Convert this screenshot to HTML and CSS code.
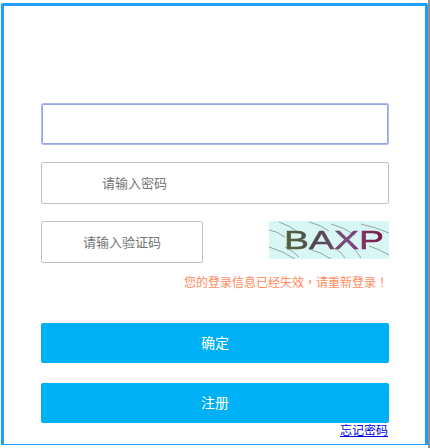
FILE: index.html
```html
<!DOCTYPE html>
<html lang="zh-CN">
<head>
    <meta charset="UTF-8">
    <title>登录</title>
    <link rel="stylesheet" href="styles.css">
</head>
<body>
    <div class="dialog">
        <form class="login-form">
            <input class="field field-active" type="text">
            <input class="field field-password" type="text" placeholder="请输入密码">
            <div class="captcha-row">
                <input class="field field-code" type="text" placeholder="请输入验证码">
                <svg class="captcha" viewBox="0 0 120 38" width="120" height="38">
                    <defs>
                        <linearGradient id="captcha-ink" x1="0" y1="0" x2="1" y2="0">
                            <stop offset="0" stop-color="#55663a"/>
                            <stop offset="0.3" stop-color="#4d4a4a"/>
                            <stop offset="0.65" stop-color="#7a4a80"/>
                            <stop offset="1" stop-color="#7a1440"/>
                        </linearGradient>
                        <filter id="captcha-blur"><feGaussianBlur stdDeviation="0.35"/></filter>
                    </defs>
                    <rect width="120" height="38" fill="#d8f6f3"/>
                    <g stroke="#8a9ba3" stroke-width="0.9" fill="none" filter="url(#captcha-blur)">
                        <path d="M0 9 Q8 10 16 16"/>
                        <path d="M10 1 Q20 4 30 12"/>
                        <path d="M40 1 Q50 3 60 10"/>
                        <path d="M62 3 Q74 6 86 14"/>
                        <path d="M92 3 Q106 6 120 12"/>
                        <path d="M0 26 Q14 30 26 38"/>
                        <path d="M16 26 Q24 30 30 36"/>
                        <path d="M40 28 Q52 31 62 38"/>
                        <path d="M66 27 Q72 31 76 37"/>
                        <path d="M84 26 Q88 31 92 37"/>
                        <path d="M100 25 Q110 28 120 34"/>
                    </g>
                    <text class="captcha-text" x="15" y="28" textLength="100" lengthAdjust="spacingAndGlyphs" filter="url(#captcha-blur)">BAXP</text>
                </svg>
            </div>
            <p class="message" lang="zh-Hant">您的登录信息已经失效，请重新登录！</p>
            <button class="btn btn-first" type="button">确定</button>
            <button class="btn" type="button">注册</button>
            <a class="forgot" href="#">忘记密码</a>
        </form>
    </div>
</body>
</html>
```

FILE: styles.css
```css
body { margin: 0; background: linear-gradient(to right, white 428px, #8f8f8f 428px); font-family: "Liberation Sans", "Noto Sans CJK SC", sans-serif; padding-top: 3px; height: 445px; box-sizing: border-box; }
.dialog { width: 427px; height: 444px; margin-left: 1px; box-sizing: border-box; border: 3px solid #1e9fff; border-radius: 2px; background: white; padding: 97px 37px 0; }
.login-form { display: flex; flex-direction: column; }
.field { display: block; height: 42px; box-sizing: border-box; border: 1px solid #c2c2c2; border-radius: 2px; font-size: 13px; font-family: inherit; outline: none; background: white; color: #666; }
.field::placeholder { color: #757575; opacity: 1; }
.field-active { width: 348px; border-color: #a9bff3; box-shadow: inset 0 0 0 1px #8ea8e8; margin-bottom: 17px; }
.field-password { width: 348px; padding-left: 60px; margin-bottom: 17px; }
.captcha-row { display: flex; justify-content: space-between; align-items: flex-start; width: 348px; }
.field-code { width: 162px; text-align: center; }
.captcha { display: block; }
.captcha-text { font-family: "Liberation Sans", sans-serif; font-size: 26px; fill: url(#captcha-ink); stroke: url(#captcha-ink); stroke-width: 0.5; }
.message { margin: 12px 0 0; font-family: "Liberation Sans", "Noto Sans CJK TC", sans-serif; font-size: 12px; line-height: 16px; text-align: right; color: #ff8a5c; }
.btn { display: block; width: 348px; height: 40px; padding: 0 0 2px; border: none; border-radius: 2px; background-color: #00b0f5; color: white; font-size: 14px; font-family: inherit; margin-top: 20px; }
.btn-first { margin-top: 32px; }
.forgot { align-self: flex-end; font-size: 12px; line-height: 16px; color: #0000ee; text-decoration: underline; }
```
